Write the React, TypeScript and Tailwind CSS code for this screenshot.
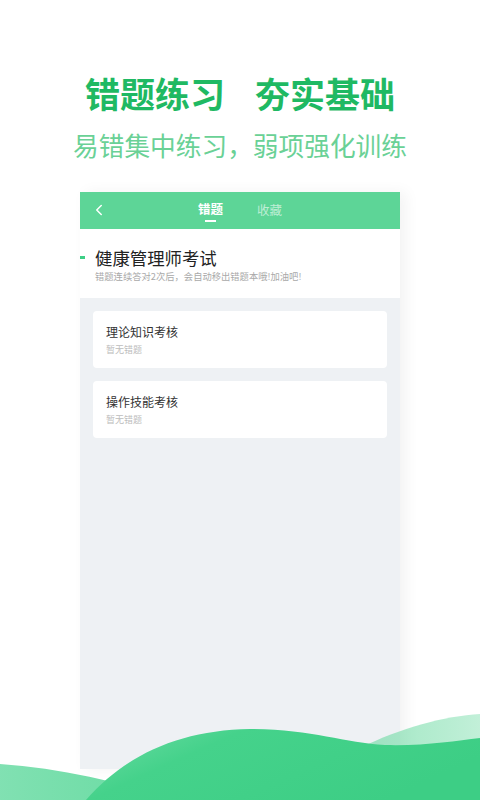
import { ChevronLeft } from "lucide-react";

const cards = [
  { title: "理论知识考核", note: "暂无错题" },
  { title: "操作技能考核", note: "暂无错题" },
];

function Waves() {
  return (
    <svg
      className="absolute bottom-0 left-0"
      width="480"
      height="100"
      viewBox="0 700 480 100"
    >
      <defs>
        <linearGradient id="main" x1="0" y1="0" x2="1" y2="0.4">
          <stop offset="0" stopColor="#6fdca6" />
          <stop offset="0.35" stopColor="#45d28b" />
          <stop offset="1" stopColor="#3dce85" />
        </linearGradient>
        <linearGradient id="left" x1="0" y1="0" x2="1" y2="0">
          <stop offset="0" stopColor="#7adfae" stopOpacity="0.95" />
          <stop offset="1" stopColor="#4fd592" stopOpacity="0.85" />
        </linearGradient>
        <linearGradient id="right" x1="0" y1="0" x2="1" y2="0">
          <stop offset="0" stopColor="#59d596" stopOpacity="0.55" />
          <stop offset="1" stopColor="#a8e9c8" stopOpacity="0.7" />
        </linearGradient>
      </defs>
      <path d="M0,764 C60,768 120,782 175,800 L0,800 Z" fill="url(#left)" />
      <path
        d="M360,748 C400,728 445,716 480,714 L480,800 L360,800 Z"
        fill="url(#right)"
      />
      <path
        d="M86,800 C125,755 180,730 250,729 C310,729 345,743 385,745 C425,746 455,741 480,738 L480,800 Z"
        fill="url(#main)"
      />
    </svg>
  );
}

export default function App() {
  return (
    <div
      className="relative h-[800px] w-[480px] overflow-hidden bg-white"
      style={{ fontFamily: '"Noto Sans CJK SC", "Noto Sans", sans-serif' }}
    >
      <div className="flex flex-col items-center pt-[75px]">
        <h1 className="flex gap-[30px] text-[35px] font-bold leading-[35px] text-[#1fb963]">
          <span>错题练习</span>
          <span>夯实基础</span>
        </h1>
        <p className="mt-[22px] text-[25.7px] leading-[26px] text-[#6ad196]">
          易错集中练习，弱项强化训练
        </p>

        <div className="mt-[34px] w-[320px] bg-white shadow-[6px_0_14px_rgba(0,0,0,0.05)]">
          <div className="relative flex h-[37px] items-center justify-center gap-[34px] bg-[#5dd597]">
            <ChevronLeft
              className="absolute left-[10px] top-[9px] h-[18px] w-[18px] text-white"
              strokeWidth={2}
            />
            <div className="flex flex-col items-center pt-[4px]">
              <span className="text-[12.5px] font-bold leading-none text-white">
                错题
              </span>
              <span className="mt-[4px] h-[2.5px] w-[11px] bg-white" />
            </div>
            <span className="text-[12.5px] leading-none text-white/60">
              收藏
            </span>
          </div>

          <div className="h-[69px] pt-[20px]">
            <div className="flex items-center">
              <span className="h-[3px] w-[5px] bg-[#3ecf86]" />
              <span className="ml-[10px] text-[17.4px] leading-[17px] text-[#222]">
                健康管理师考试
              </span>
            </div>
            <p className="mt-[4px] pl-[15px] text-[9.3px] leading-[12px] text-[#a9a9a9]">
              错题连续答对2次后，会自动移出错题本哦!加油吧!
            </p>
          </div>

          <div className="flex h-[471px] flex-col gap-[13px] bg-[#eef1f4] px-[13px] pt-[13px]">
            {cards.map((c) => (
              <div
                key={c.title}
                className="h-[57px] rounded-[4px] bg-white px-[13px] pt-[13px]"
              >
                <div className="text-[12px] leading-[16px] text-[#333]">
                  {c.title}
                </div>
                <div className="mt-[4px] text-[9px] leading-[12px] text-[#bdbdbd]">
                  {c.note}
                </div>
              </div>
            ))}
          </div>
        </div>
      </div>
      <Waves />
    </div>
  );
}
